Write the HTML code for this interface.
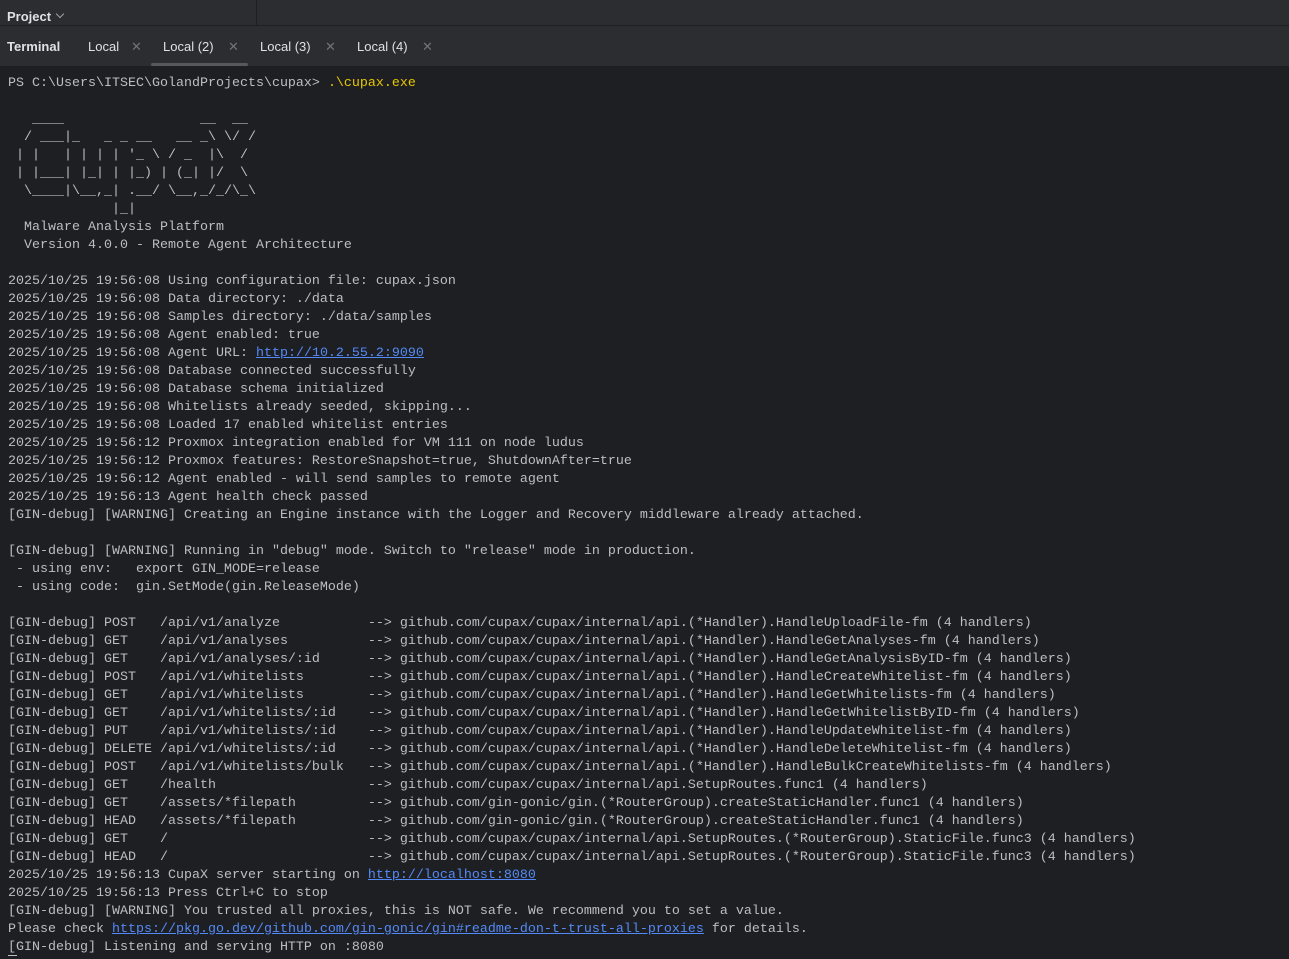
<!DOCTYPE html>
<html><head><meta charset="utf-8"><style>
html,body{margin:0;padding:0;width:1289px;height:959px;overflow:hidden;background:#1e1f22;}
.top{position:absolute;left:0;top:0;width:1289px;height:25px;background:#2b2d30;border-bottom:1px solid #1e1f22;}
.top .p{position:absolute;left:7px;top:9px;font:600 13px "Liberation Sans",sans-serif;color:#dfe1e5;}
.top .c{position:absolute;left:57px;top:11px;width:5px;height:5px;border-right:1px solid #9da0a8;border-bottom:1px solid #9da0a8;transform:rotate(45deg);}
.top .sep{position:absolute;left:256px;top:0;width:1px;height:25px;background:#1e1f22;}
.tabs{position:absolute;left:0;top:26px;width:1289px;height:40px;background:#2b2d30;font:13px "Liberation Sans",sans-serif;color:#dfe1e5;}
.tabs span{position:absolute;top:13px;}
.tabs .x{color:#6f737a;font-size:13px;}
.ul{position:absolute;left:151px;top:37px;width:97px;height:3px;background:#56585e;border-radius:2px;}
pre{position:absolute;left:8px;top:75px;margin:0;font:13.33px/18px "Liberation Mono",monospace;color:#bcbec4;}
.y{color:#e6c700}
a{color:#548af7;text-decoration:underline;}
.cur{position:absolute;left:8px;top:955px;width:9px;height:1px;background:#bcbec4;}
</style></head><body>
<div class="top"><span class="p">Project</span><div class="c"></div><div class="sep"></div></div>
<div class="tabs">
<span style="left:7px;font-weight:600">Terminal</span>
<span style="left:88px">Local</span><span class="x" style="left:131px">✕</span>
<span style="left:163px">Local (2)</span><span class="x" style="left:228px">✕</span>
<span style="left:260px">Local (3)</span><span class="x" style="left:325px">✕</span>
<span style="left:357px">Local (4)</span><span class="x" style="left:422px">✕</span>
<div class="ul"></div>
</div>
<pre>PS C:\Users\ITSEC\GolandProjects\cupax&gt; <span class="y">.\cupax.exe</span>

   ____                 __  __
  / ___|_   _ _ __   __ _\ \/ /
 | |   | | | | '_ \ / _  |\  /
 | |___| |_| | |_) | (_| |/  \
  \____|\__,_| .__/ \__,_/_/\_\
             |_|
  Malware Analysis Platform
  Version 4.0.0 - Remote Agent Architecture

2025/10/25 19:56:08 Using configuration file: cupax.json
2025/10/25 19:56:08 Data directory: ./data
2025/10/25 19:56:08 Samples directory: ./data/samples
2025/10/25 19:56:08 Agent enabled: true
2025/10/25 19:56:08 Agent URL: <a>http://10.2.55.2:9090</a>
2025/10/25 19:56:08 Database connected successfully
2025/10/25 19:56:08 Database schema initialized
2025/10/25 19:56:08 Whitelists already seeded, skipping...
2025/10/25 19:56:08 Loaded 17 enabled whitelist entries
2025/10/25 19:56:12 Proxmox integration enabled for VM 111 on node ludus
2025/10/25 19:56:12 Proxmox features: RestoreSnapshot=true, ShutdownAfter=true
2025/10/25 19:56:12 Agent enabled - will send samples to remote agent
2025/10/25 19:56:13 Agent health check passed
[GIN-debug] [WARNING] Creating an Engine instance with the Logger and Recovery middleware already attached.

[GIN-debug] [WARNING] Running in "debug" mode. Switch to "release" mode in production.
 - using env:   export GIN_MODE=release
 - using code:  gin.SetMode(gin.ReleaseMode)

[GIN-debug] POST   /api/v1/analyze           --&gt; github.com/cupax/cupax/internal/api.(*Handler).HandleUploadFile-fm (4 handlers)
[GIN-debug] GET    /api/v1/analyses          --&gt; github.com/cupax/cupax/internal/api.(*Handler).HandleGetAnalyses-fm (4 handlers)
[GIN-debug] GET    /api/v1/analyses/:id      --&gt; github.com/cupax/cupax/internal/api.(*Handler).HandleGetAnalysisByID-fm (4 handlers)
[GIN-debug] POST   /api/v1/whitelists        --&gt; github.com/cupax/cupax/internal/api.(*Handler).HandleCreateWhitelist-fm (4 handlers)
[GIN-debug] GET    /api/v1/whitelists        --&gt; github.com/cupax/cupax/internal/api.(*Handler).HandleGetWhitelists-fm (4 handlers)
[GIN-debug] GET    /api/v1/whitelists/:id    --&gt; github.com/cupax/cupax/internal/api.(*Handler).HandleGetWhitelistByID-fm (4 handlers)
[GIN-debug] PUT    /api/v1/whitelists/:id    --&gt; github.com/cupax/cupax/internal/api.(*Handler).HandleUpdateWhitelist-fm (4 handlers)
[GIN-debug] DELETE /api/v1/whitelists/:id    --&gt; github.com/cupax/cupax/internal/api.(*Handler).HandleDeleteWhitelist-fm (4 handlers)
[GIN-debug] POST   /api/v1/whitelists/bulk   --&gt; github.com/cupax/cupax/internal/api.(*Handler).HandleBulkCreateWhitelists-fm (4 handlers)
[GIN-debug] GET    /health                   --&gt; github.com/cupax/cupax/internal/api.SetupRoutes.func1 (4 handlers)
[GIN-debug] GET    /assets/*filepath         --&gt; github.com/gin-gonic/gin.(*RouterGroup).createStaticHandler.func1 (4 handlers)
[GIN-debug] HEAD   /assets/*filepath         --&gt; github.com/gin-gonic/gin.(*RouterGroup).createStaticHandler.func1 (4 handlers)
[GIN-debug] GET    /                         --&gt; github.com/cupax/cupax/internal/api.SetupRoutes.(*RouterGroup).StaticFile.func3 (4 handlers)
[GIN-debug] HEAD   /                         --&gt; github.com/cupax/cupax/internal/api.SetupRoutes.(*RouterGroup).StaticFile.func3 (4 handlers)
2025/10/25 19:56:13 CupaX server starting on <a>http://localhost:8080</a>
2025/10/25 19:56:13 Press Ctrl+C to stop
[GIN-debug] [WARNING] You trusted all proxies, this is NOT safe. We recommend you to set a value.
Please check <a>https://pkg.go.dev/github.com/gin-gonic/gin#readme-don-t-trust-all-proxies</a> for details.
[GIN-debug] Listening and serving HTTP on :8080
</pre>
<div class="cur"></div>
</body></html>
